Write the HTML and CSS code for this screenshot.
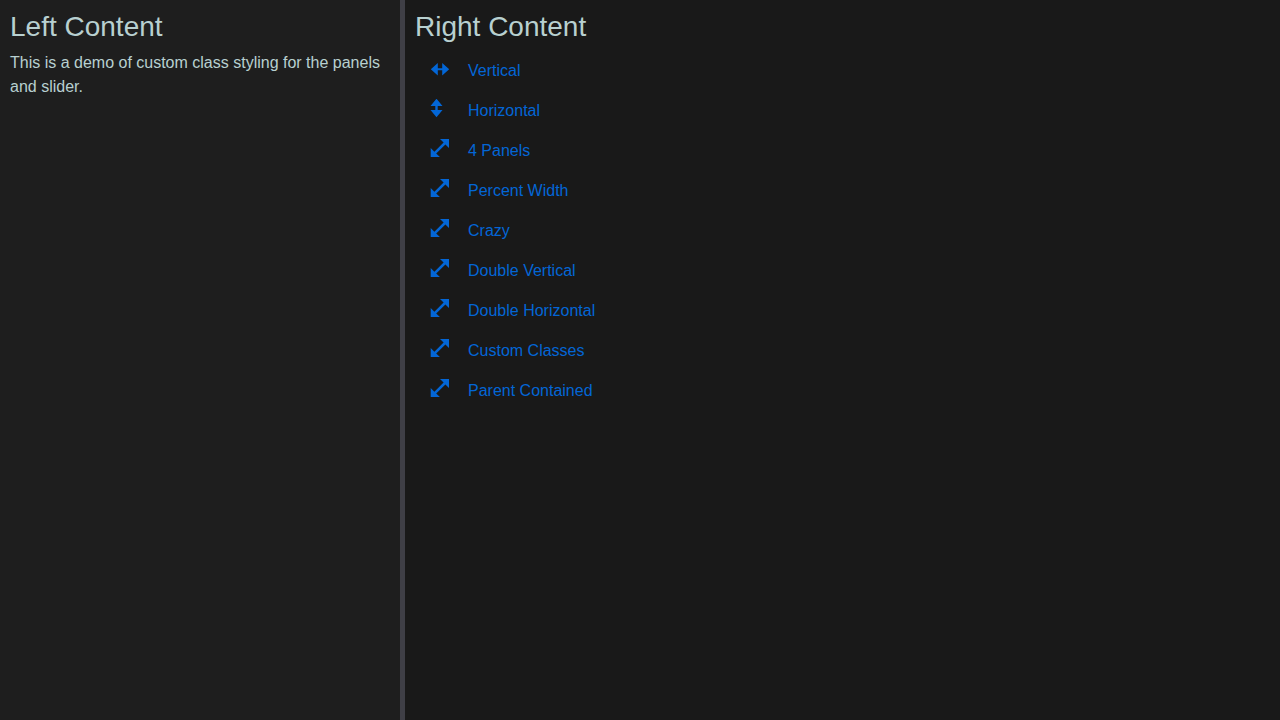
FILE: index.html
```html
<!DOCTYPE html>
<html lang="en">
<head>
<meta charset="utf-8">
<title>Custom Classes</title>
<link rel="stylesheet" href="styles.css">
</head>
<body>
<svg class="sprite" aria-hidden="true">
  <symbol id="both-x" viewBox="0 0 20 20"><path d="M.8 10.300 7.800 4v5.300h4.400V4L19.200 10.300 12.200 16.600v-5.300H7.800v5.300z"/></symbol>
  <symbol id="both-y" viewBox="0 0 20 20"><path d="M6.500 -.3 12.500 7H7.700v4h4.800L6.500 18.300 .5 11h4.800V7H.5z"/></symbol>
  <symbol id="diagonal" viewBox="0 0 20 20"><path d="M10 0H19V9L15.400 5.400 6.200 14.400 9.900 18H.7V9L4.400 12.700 13.600 3.600z"/></symbol>
</svg>
<div class="split">
  <section class="panel panel-left">
    <h3 class="title">Left Content</h3>
    <p class="text">This is a demo of custom class styling for the panels and slider.</p>
  </section>
  <div class="slider" role="separator" aria-orientation="vertical"></div>
  <section class="panel panel-right">
    <h3 class="title">Right Content</h3>
    <nav class="nav">
      <a class="nav-link" href="#vertical"><svg class="icon"><use href="#both-x"/></svg>Vertical</a>
      <a class="nav-link" href="#horizontal"><svg class="icon"><use href="#both-y"/></svg>Horizontal</a>
      <a class="nav-link" href="#panels"><svg class="icon"><use href="#diagonal"/></svg>4 Panels</a>
      <a class="nav-link" href="#percent"><svg class="icon"><use href="#diagonal"/></svg>Percent Width</a>
      <a class="nav-link" href="#crazy"><svg class="icon"><use href="#diagonal"/></svg>Crazy</a>
      <a class="nav-link" href="#double-vertical"><svg class="icon"><use href="#diagonal"/></svg>Double Vertical</a>
      <a class="nav-link" href="#double-horizontal"><svg class="icon"><use href="#diagonal"/></svg>Double Horizontal</a>
      <a class="nav-link" href="#custom"><svg class="icon"><use href="#diagonal"/></svg>Custom Classes</a>
      <a class="nav-link" href="#parent"><svg class="icon"><use href="#diagonal"/></svg>Parent Contained</a>
    </nav>
  </section>
</div>
</body>
</html>
```
FILE: styles.css
```css
* { box-sizing: border-box; }
body {
  margin: 0;
  background: #191919;
  color: #b8d0d0;
  font: 16px/24px "Liberation Sans", Arial, sans-serif;
}
.sprite { display: none; }
.split { display: flex; min-height: 100vh; }
.panel { padding: 10px; }
.panel-left { flex: 0 0 400px; background: #1e1e1e; }
.panel-right { flex: 1; background: #191919; }
.slider { flex: 0 0 5px; background: #3f3f46; cursor: ew-resize; }
.title { margin: 0 0 7px; font-size: 28px; line-height: 34px; font-weight: 400; }
.text { margin: 0; }
.nav { display: flex; flex-direction: column; }
.nav-link {
  display: flex;
  gap: 18px;
  padding: 8px 15px;
  color: #0366d6;
  text-decoration: none;
}
.icon { width: 20px; height: 20px; fill: currentColor; overflow: visible; }
```
